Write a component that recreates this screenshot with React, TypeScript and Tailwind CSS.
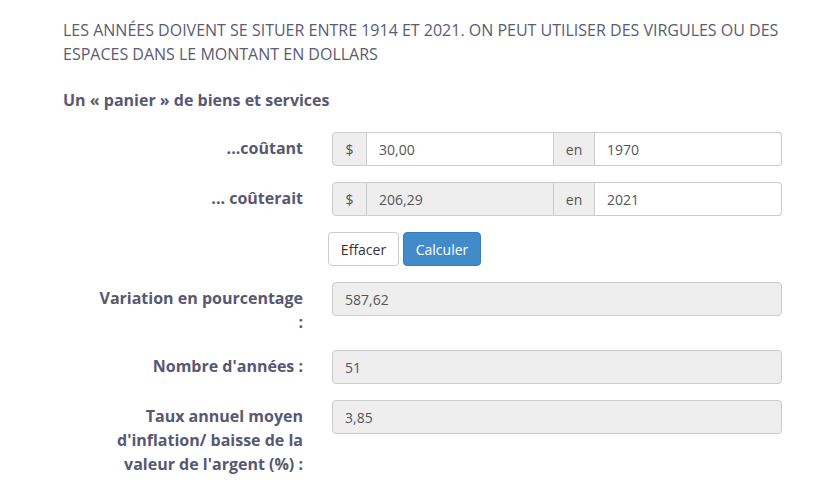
import React from "react";

const font = { fontFamily: '"Open Sans", "Liberation Sans", sans-serif' };

function Row({ label, children }: { label: React.ReactNode; children: React.ReactNode }) {
  return (
    <div className="grid grid-cols-[240px_450px] gap-x-[29px]">
      <div className="pl-[32px] pt-[4px] text-right text-[16px] font-bold leading-[24px] text-[#585872]">{label}</div>
      <div>{children}</div>
    </div>
  );
}

function Addon({ children, className = "" }: { children: React.ReactNode; className?: string }) {
  return (
    <div className={"flex shrink-0 items-center justify-center border border-[#ccc] bg-[#eee] text-[14px] text-[#555] " + className}>
      {children}
    </div>
  );
}

function ReadOnly({ value }: { value: string }) {
  return (
    <div className="flex h-[34px] items-center rounded border border-[#ccc] bg-[#eee] px-3 text-[14px] text-[#555]">
      {value}
    </div>
  );
}

export default function App() {
  return (
    <div className="min-h-screen bg-white pl-[63px] pt-[18px]" style={font}>
      <p className="w-[740px] text-[16px] leading-[24px] text-[#5b5b74] uppercase">
        Les années doivent se situer entre 1914 et 2021. On peut utiliser des virgules ou des espaces dans le montant en dollars
      </p>
      <h3 className="mt-[22px] text-[16px] font-bold leading-[24px] text-[#585872]">Un « panier » de biens et services</h3>

      <div className="mt-[20px] flex flex-col gap-[16px]">
        <Row label="...coûtant">
          <div className="flex h-[34px]">
            <Addon className="w-[35px] rounded-l">$</Addon>
            <input
              readOnly
              value="30,00"
              className="w-[186px] min-w-0 shrink-0 border-y border-[#ccc] bg-white px-3 text-[14px] text-[#555] outline-none"
            />
            <Addon className="w-[42px]">en</Addon>
            <input
              readOnly
              value="1970"
              className="min-w-0 flex-1 rounded-r border border-l-0 border-[#ccc] bg-white px-3 text-[14px] text-[#555] outline-none"
            />
          </div>
        </Row>
        <Row label="... coûterait">
          <div className="flex h-[34px]">
            <Addon className="w-[35px] rounded-l">$</Addon>
            <div className="flex w-[186px] shrink-0 items-center border-y border-[#ccc] bg-[#eee] px-3 text-[14px] text-[#555]">206,29</div>
            <Addon className="w-[42px]">en</Addon>
            <input
              readOnly
              value="2021"
              className="min-w-0 flex-1 rounded-r border border-l-0 border-[#ccc] bg-white px-3 text-[14px] text-[#555] outline-none"
            />
          </div>
        </Row>
        <Row label="">
          <div className="-ml-[4px] flex gap-[4px]">
            <button className="h-[34px] w-[71px] rounded border border-[#ccc] bg-white text-[14px] text-[#333]">Effacer</button>
            <button className="h-[34px] w-[78px] rounded border border-[#357ebd] bg-[#428bca] text-[14px] text-white">Calculer</button>
          </div>
        </Row>
        <Row label="Variation en pourcentage :">
          <ReadOnly value="587,62" />
        </Row>
        <Row label="Nombre d'années :">
          <ReadOnly value="51" />
        </Row>
        <Row label="Taux annuel moyen d'inflation/ baisse de la valeur de l'argent (%) :">
          <ReadOnly value="3,85" />
        </Row>
      </div>
    </div>
  );
}
